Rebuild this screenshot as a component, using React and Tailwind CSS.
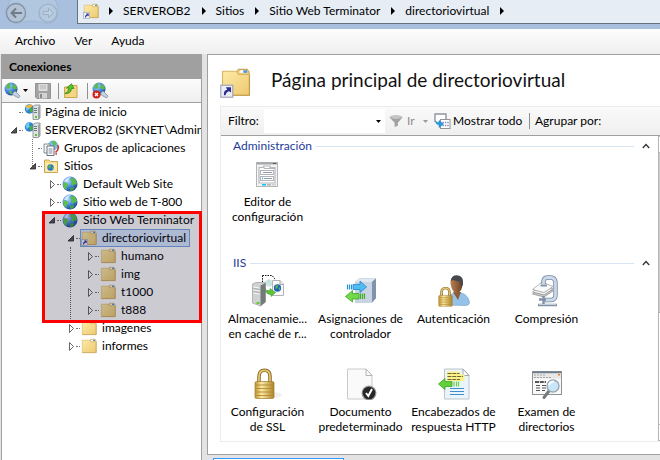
import React from "react";

function Globe({ size = 16 }) {
  return (
    <svg width={size} height={size} viewBox="0 0 16 16" className="shrink-0">
      <defs>
        <radialGradient id="globe" cx="0.35" cy="0.3" r="0.8">
          <stop offset="0" stopColor="#b4dcff" />
          <stop offset="0.5" stopColor="#4686e0" />
          <stop offset="1" stopColor="#17398f" />
        </radialGradient>
      </defs>
      <circle cx="8" cy="8" r="7.5" fill="url(#globe)" />
      <path d="M1 8 L3 6 L5.500 7.500 L6 9.500 L4.500 11 L4.800 14 L2 12 Z" fill="#5cc04a" />
      <path d="M8 4 L10 1.500 L13 3 L15 6.500 L14 9 L12 8 L11 10.500 L9 8 L10 6 Z" fill="#58bb4b" />
      <path d="M8 12 L11 11 L12.500 12.500 L10 15 L8 14.500 Z" fill="#3f9f44" />
      <path d="M2 6 Q4 0.800 9 1 Q5.500 3 5 6 Z" fill="#fff" opacity=".6" />
    </svg>
  );
}

function Folder({ shortcut = false, size = 16 }) {
  return (
    <svg width={size} height={size} viewBox="0 0 16 16" className="shrink-0">
      <defs>
        <linearGradient id="folder" x1="0" y1="0" x2="1" y2="1">
          <stop offset="0" stopColor="#fdeaa6" />
          <stop offset="1" stopColor="#edc970" />
        </linearGradient>
      </defs>
      <path d="M8 4 L9.500 1.200 H14 L15 2.500 V5 H8 Z" fill="#efd58d" stroke="#c8a65a" strokeWidth=".6" />
      <rect x="10.500" y="1.700" width="2.600" height="1.300" fill="#fff" />
      <rect x="12" y="1.700" width="2" height="1.300" fill="#4a94e2" />
      <path d="M1.300 2.200 H8.500 L9.500 3.800 H15.200 V14.600 H1.300 Z" fill="url(#folder)" stroke="#d9b565" strokeWidth=".6" />
      <path d="M15.200 4 V14.600 H1.300" fill="none" stroke="#bf9c50" strokeWidth=".6" />
      {shortcut && (
        <g>
          <rect x=".4" y="9.400" width="6.200" height="6.200" fill="#eceef6" stroke="#a0a3b4" strokeWidth=".6" />
          <path d="M2 14.600 Q1.800 11.900 3.700 11.700 L3.100 10.500 H5.700 V13.200 L4.700 12.500 Q3.100 12.900 2.900 14.600 Z" fill="#2c2f92" />
        </g>
      )}
    </svg>
  );
}

function Server({ home = false }) {
  return (
    <svg width="17" height="16" viewBox="0 0 17 16" className="shrink-0">
      <circle cx="5.500" cy="5" r="4.700" fill="#2f7fd0" />
      <path d="M1.500 3.500 Q3 .8 6 .6 L5 3 L6 5 L3.500 6 L3 8 Z" fill="#6fcdee" />
      <path d="M5.500 5 L8 3 L9 7 L6 9 Z" fill="#49ab43" />
      {home && <path d="M1 1 L4 2 L6 0 L9 2 L6 4 L3 4 Z" fill="#f2b53a" />}
      <path d="M9 2.500 L11 1 H16 V14 L14 15.500 H9 Z" fill="#dfe2e2" stroke="#7d8688" strokeWidth=".8" />
      <path d="M14 3 L16 1.500 V14 L14 15.500 Z" fill="#9aa2a4" />
      <path d="M10 4.500 H13 M10 6.500 H13 M10 8.500 H13" stroke="#69787b" />
      <rect x="11" y="12" width="2" height="2" fill="#57c930" />
    </svg>
  );
}

function AppPools() {
  return (
    <svg width="17" height="16" viewBox="0 0 17 16" className="shrink-0">
      <circle cx="10" cy="5.500" r="5" fill="#79c0ec" />
      <path d="M8 1.500 L12 1 L14 4 L11 6 Z" fill="#65bd58" />
      <path d="M14.500 5 Q17 9 12.500 12.500" fill="none" stroke="#c8362c" strokeWidth="1.600" />
      <path d="M1 4 H7 V13 H1 Z" fill="#f2f4f6" stroke="#6f7780" strokeWidth=".8" />
      <path d="M4 6 H11 V15.500 H4 Z" fill="#fff" stroke="#5b636c" strokeWidth=".9" />
      <path d="M5.500 9 H9.500 M5.500 11 H9.500 M5.500 13 H9.500" stroke="#7c8aa0" />
      <path d="M11 14 L14 13 V15 Z" fill="#d84a38" />
    </svg>
  );
}

function SitesFolder() {
  return (
    <svg width="16" height="16" viewBox="0 0 16 16" className="shrink-0">
      <path d="M1.500 2 H6 L7.500 3.500 H14.500 V14.500 H1.500 Z" fill="#f8dc8c" stroke="#c5a04a" strokeWidth=".9" />
      <rect x="2.500" y="5" width="11.500" height="9" fill="#fbe9ae" />
      <circle cx="7.500" cy="9.500" r="3.200" fill="#2f74cc" />
      <path d="M5 8 L8 6.500 L8 9 L6 11 Z M9 9 L11 9 L9 12 Z" fill="#54b845" />
    </svg>
  );
}

function ConnectIcon({ remove = false }) {
  return (
    <svg width="17" height="17" viewBox="0 0 17 17">
      <circle cx="7" cy="7" r="6.500" fill="url(#globe)" />
      <path d="M2 4 L4 1.500 L6.500 1 L6 4 L7 6 L3.500 7 Z M8 5 L10 2 L12.500 4 L13 7 L10 7.500 Z M5 9 L8 9 L8 12 L6 12 Z" fill="#59bc49" />
      <path d="M8 12 L11 9 L16 14 L14.500 16 L11 14 Z" fill="#c3d4de" stroke="#7c93a1" strokeWidth=".8" />
      {remove && (
        <g>
          <circle cx="4.500" cy="12.500" r="4" fill="#d0201c" />
          <path d="M3 11 L6 14 M6 11 L3 14" stroke="#fff" strokeWidth="1.300" />
        </g>
      )}
    </svg>
  );
}

function SaveIcon() {
  return (
    <svg width="16" height="16" viewBox="0 0 16 16">
      <path d="M.5 .5 H15.500 V15.500 H2 L.5 14 Z" fill="#a3a3a3" stroke="#949494" />
      <rect x="3.500" y="1" width="9" height="7" fill="#dcdcdc" />
      <path d="M5 3 H11 M5 5 H11" stroke="#b5b5b5" />
      <rect x="4" y="10" width="8" height="5.500" fill="#d2d2d2" />
      <rect x="5" y="11" width="2" height="4" fill="#8a8a8a" />
    </svg>
  );
}

function UpFolder() {
  return (
    <svg width="16" height="16" viewBox="0 0 16 16">
      <path d="M1.500 4 H8 L9 2.500 H14 V14.500 H1.500 Z" fill="#f6d682" stroke="#c39d44" strokeWidth=".9" />
      <path d="M2 10.500 Q5.500 9.500 6 5 H3.500 L8.500 .8 L11 5.500 H8.500 Q8 11 2 10.500 Z" fill="#54c32f" stroke="#2f8d17" strokeWidth=".8" />
    </svg>
  );
}

function NavArrows() {
  return (
    <svg width="60" height="26" viewBox="0 0 60 26" className="shrink-0">
      <path d="M10 -4 H46 Q58 0 56 14 Q53 25 43 23 Q30 19 17 23 Q5 24 3 12 Z" fill="#b1c7e0" stroke="#9ab3cf" strokeWidth=".8" />
      <circle cx="14" cy="13" r="9.500" fill="#b3c3d5" stroke="#8292a4" strokeWidth="1.300" />
      <path d="M20 13 H9.500 M14 8.500 L9.500 13 L14 17.500" fill="none" stroke="#6f7c8a" strokeWidth="2" />
      <circle cx="46" cy="13" r="9" fill="#b5c9df" stroke="#9aafc6" strokeWidth="1.200" />
      <path d="M41 11.500 H46.500 V8.500 L51.500 13 L46.500 17.500 V14.500 H41 Z" fill="#bed0e4" stroke="#9aaec5" />
    </svg>
  );
}

function Funnel() {
  return (
    <svg width="14" height="14" viewBox="0 0 15 14">
      <ellipse cx="7.500" cy="3" rx="7" ry="2.400" fill="#c4c4c4" />
      <path d="M.5 3 L6 9 V13.500 L9.500 12 V9 L14.500 3 Q7.500 6.500 .5 3 Z" fill="#a2a2a2" />
    </svg>
  );
}

function ShowAll() {
  return (
    <svg width="17" height="16" viewBox="0 0 17 16">
      <path d="M1 9 V1 H12 V6" fill="#fff" stroke="#8f959b" strokeWidth="1.400" />
      <rect x="6.500" y="6.500" width="9.500" height="9" fill="#fff" stroke="#8f959b" />
      <path d="M8.500 9.500 H15 M8.500 12.500 H15" stroke="#8086bb" strokeWidth="1.400" strokeDasharray="1.400 1" />
      <path d="M1.500 8 Q2 12 5 11.500 V14.500 L9.500 11 L5 7.500 V9.500 Q3 10 1.500 8 Z" fill="#27a0e2" stroke="#1572b5" strokeWidth=".5" />
    </svg>
  );
}

function EditorIcon() {
  return (
    <svg width="32" height="32" viewBox="0 0 32 32">
      <rect x="4.500" y="4.500" width="21" height="24" fill="#f4f4f4" stroke="#b4b4b4" />
      <path d="M5 5.500 H25" stroke="#a3a7ab" strokeWidth="2" />
      <path d="M21 5.500 H24" stroke="#5b6067" />
      <path d="M7 25 V9.500 H11 L12 8 H18 V9.500 H23 V25 Z" fill="#fff" stroke="#b4b7bb" strokeWidth="1.200" />
      <path d="M12 8.500 V10.500 H23" stroke="#b4b7bb" fill="none" />
      <rect x="8.500" y="12.500" width="13" height="4" fill="#fff" stroke="#b0b4b9" />
      <rect x="8.500" y="18.500" width="13" height="4" fill="#fff" stroke="#b0b4b9" />
      <path d="M11 14.500 H20 M12 20.500 H20" stroke="#8d98a8" />
      <path d="M10 20.500 H11" stroke="#1aa7e0" strokeWidth="1.500" />
      <path d="M10 26.800 H14" stroke="#12c5f5" strokeWidth="1.600" />
      <path d="M15 26.800 H19" stroke="#b6b6b6" strokeWidth="1.600" />
      <path d="M20 26.800 H24" stroke="#d2d2d2" strokeWidth="1.600" />
    </svg>
  );
}

function CacheIcon() {
  return (
    <svg width="32" height="32" viewBox="0 0 32 32">
      <path d="M10.500 .5 H20 L23 4 V16 H10.500 Z" fill="#fff" stroke="#111" strokeDasharray="1.500 1" />
      <circle cx="17" cy="8" r="3.800" fill="#cfe5f3" />
      <path d="M15 6 L18 5 L17 9 Z M18 8 L20 8 L18.500 11 Z" fill="#bde3b4" />
      <path d="M.5 9 L4 7.500 H13.500 V27 L8.500 31 L.5 28 Z" fill="#cfd1d2" stroke="#999d9f" strokeWidth=".7" />
      <path d="M8.500 10.500 L13.500 8 V27 L8.500 31 Z" fill="#75797b" />
      <path d="M1.500 12 L7.500 13 M1.500 15 L7.500 16 M1.500 18 L7.500 19" stroke="#f2f4f4" strokeWidth="1.200" />
      <path d="M1.500 13.500 L7.500 14.500 M1.500 16.500 L7.500 17.500" stroke="#8d9193" strokeWidth=".6" />
      <rect x="4.500" y="27" width="3" height="2" fill="#5fd02f" />
      <path d="M20.500 5.500 H28 L31.500 9 V20.500 H20.500 Z" fill="#fbfbfb" stroke="#b4b4b4" />
      <path d="M28 5.500 V9.500 H32" fill="#e9e9e9" stroke="#a9a9a9" />
      <circle cx="25.500" cy="13" r="3.700" fill="#235fbd" />
      <path d="M23.500 10.500 L26.500 10 L25.500 13 L23.500 14 Z M26.500 13 L28.500 12 L27.500 16 Z" fill="#54bd4b" />
      <path d="M13 14 Q15 17 18 16 V13.500 L23.500 17.500 L19 21.500 V19.500 Q14 19.500 13 14 Z" fill="#5cc435" stroke="#3c9d29" strokeWidth=".6" />
    </svg>
  );
}

function HandlerIcon() {
  return (
    <svg width="32" height="32" viewBox="0 0 32 32">
      <path d="M10 7 L14 3.500 H31 V23 L27 27.500 H10 Z" fill="#8d9fb5" />
      <path d="M10 7 L14 3.500 H31 L27 7 Z" fill="#dfe7f1" />
      <rect x="10" y="7" width="17" height="20.500" fill="#c8d4e3" />
      <path d="M27 7 L31 3.500 V23 L27 27.500 Z" fill="#8093ae" />
      <path d="M8 9.500 H15 V6 L21.500 12 L15 17.500 V14.500 H8 Z" fill="#4fbdf2" stroke="#2384c8" strokeWidth=".8" />
      <path d="M2.500 9.500 V14.500 M4.500 9.500 V14.500 M6.500 9.500 V14.500" stroke="#2291d4" strokeWidth="1.200" />
      <path d="M14 18.500 H7.500 V15.500 L.5 21.500 L7.500 27 V24 H14 Z" fill="#72da48" stroke="#3aa524" strokeWidth=".8" />
      <path d="M15.500 18.500 V24 M17.500 18.500 V24 M19.500 18.500 V24" stroke="#43ad25" strokeWidth="1.200" />
    </svg>
  );
}

function LockShape() {
  return (
    <g>
      <path d="M5 14 V8 Q5 1.800 10.500 1.800 Q16 1.800 16 8 V14" fill="none" stroke="#8d6d28" strokeWidth="3.600" />
      <path d="M5 14 V8 Q5 1.800 10.500 1.800 Q16 1.800 16 8 V14" fill="none" stroke="#e6c976" strokeWidth="1.700" />
      <rect x="1" y="13" width="19" height="17" rx="1.500" fill="url(#brass)" stroke="#a07c2c" strokeWidth=".7" />
      <path d="M2 16.500 H19 M2 20 H19 M2 23.500 H19 M2 27 H19" stroke="#b48a2b" strokeWidth=".9" />
    </g>
  );
}

function AuthIcon() {
  return (
    <svg width="32" height="32" viewBox="0 0 32 32">
      <defs>
        <linearGradient id="skin"><stop stopColor="#b98257" /><stop offset="1" stopColor="#6b4022" /></linearGradient>
        <linearGradient id="brass"><stop stopColor="#c0932c" /><stop offset=".35" stopColor="#fbe9a8" /><stop offset="1" stopColor="#ad8224" /></linearGradient>
      </defs>
      <path d="M9 30 Q9 20 16 18 H24 Q31 21 31.500 28 Q31 30.500 27 30.500 Z" fill="#94c2e8" stroke="#6f9cc5" strokeWidth=".6" />
      <path d="M15 17 L20 25 L23 17 Z" fill="#8f5b36" />
      <path d="M12.500 9 Q12 1 18.500 1 Q25 1.500 24.500 9 Q24 17 19 18.500 Q14 17.500 12.500 9 Z" fill="url(#skin)" />
      <path d="M13 6 Q13 .3 19 .3 Q26 1 25 9 Q24.500 12 23.500 12 L22 7 L15 5 Z" fill="#45484d" />
      <svg x="0" y="12" width="15" height="20" viewBox="0 0 21 31" preserveAspectRatio="none"><LockShape /></svg>
    </svg>
  );
}

function CompressIcon() {
  return (
    <svg width="32" height="32" viewBox="0 0 32 32">
      <path d="M1.500 19 L11 12 L22 16 L13 22 Z" fill="#ccc" stroke="#777" strokeWidth=".6" />
      <path d="M1.500 17 L11 9.500 L22 14 L13 20 Z" fill="#eee" stroke="#777" strokeWidth=".6" />
      <path d="M1.500 14.500 L11 7 L22 11.500 L13 17.500 Z" fill="#fafafa" stroke="#888" strokeWidth=".6" />
      <path d="M12.500 9 V6 Q13 2.500 17 2.500 H20 Q24.500 3 24.500 8 V20 Q24.500 25 20 25 H13" fill="none" stroke="#7486a0" strokeWidth="4.400" />
      <path d="M12.500 9 V6 Q13 2.500 17 2.500 H20 Q24.500 3 24.500 8 V20 Q24.500 25 20 25 H13" fill="none" stroke="#cbd9e8" strokeWidth="2.800" />
      <path d="M9.500 10.500 H16" stroke="#8293aa" strokeWidth="2" />
      <path d="M8 24.500 H15 M12.500 21 V30 M7 30 H26" stroke="#8292a6" strokeWidth="2.400" />
      <path d="M8 29.500 H25" stroke="#d3dce5" strokeWidth=".8" />
    </svg>
  );
}

function SslIcon() {
  return (
    <svg width="32" height="32" viewBox="0 0 32 32">
      <ellipse cx="22" cy="27" rx="8" ry="3" fill="#f0f0f0" />
      <svg x="2" y="0" width="21" height="32" viewBox="0 0 21 31"><LockShape /></svg>
    </svg>
  );
}

function DocIcon() {
  return (
    <svg width="32" height="32" viewBox="0 0 32 32">
      <path d="M2.500 1 H21 L27 7 V31 H2.500 Z" fill="#fafafa" stroke="#cacaca" />
      <path d="M21 1 V7.500 H27 Z" fill="#fff" stroke="#b4b4b4" />
      <circle cx="24" cy="25" r="7.500" fill="#9b9b9b" />
      <circle cx="24" cy="25" r="6.300" fill="#262626" />
      <path d="M21 25 L23.300 28 L27 21" fill="none" stroke="#fff" strokeWidth="2" />
    </svg>
  );
}

function HeadersIcon() {
  return (
    <svg width="32" height="32" viewBox="0 0 32 32">
      <path d="M6.500 1 H25 L31 7 V31 H6.500 Z" fill="#eaf5fb" stroke="#bcc4c8" />
      <path d="M25 1 V7.500 H31 Z" fill="#fff" stroke="#a2aaae" />
      <path d="M9 3.500 H22 V6.500 H26.500 V13 H9 Z" fill="#fbf28a" />
      <path d="M9.500 5.500 H21.500 M9.500 8.500 H25 M9.500 11.500 H22" stroke="#6b6530" strokeDasharray="4 .8" />
      <path d="M12 20.500 H26 M12 23.500 H26 M12 26.500 H26" stroke="#3f8fd0" />
      <path d="M14 13.500 H7 V10.500 L.5 16 L7 21.500 V18.500 H14 Z" fill="#62d038" stroke="#3aa524" strokeWidth=".8" />
      <path d="M16 13.500 V18.500 M18.500 13.500 V18.500 M20.500 13.500 V18.500" stroke="#6ed04c" strokeWidth="1.200" />
    </svg>
  );
}

function BrowseIcon() {
  return (
    <svg width="32" height="32" viewBox="0 0 32 32">
      <rect x="1.500" y="3.500" width="29" height="23" fill="#f9f9f9" stroke="#8c9196" />
      <path d="M2 4.500 H30" stroke="#6f7c8c" strokeWidth="2" />
      <rect x="2" y="5.500" width="28" height="5" fill="#e8e8e8" />
      <path d="M3 7 H15 M3 9.500 H20" stroke="#a5a5a5" strokeDasharray="2 1" />
      <path d="M27 6.800 H29" stroke="#e0812a" strokeWidth="1.500" />
      <path d="M4 14 H15" stroke="#222" strokeWidth="1.400" strokeDasharray="4 .8" />
      <path d="M5 17.500 H9 M5 20 H9 M5 22.500 H9 M11 17.500 H15 M11 20 H15 M11 22.500 H14" stroke="#555" />
      <path d="M18 23 L13 29.500" stroke="#7a7a7a" strokeWidth="3" strokeLinecap="round" />
      <circle cx="22" cy="18" r="6" fill="#c9e5f9" stroke="#97a6b2" strokeWidth="1.300" />
      <path d="M18 17 Q19 13.500 23 13.500" fill="none" stroke="#fff" strokeWidth="1.800" />
    </svg>
  );
}

function Caret({ muted = false }) {
  return (
    <svg width="5" height="3" viewBox="0 0 5 3" className="shrink-0">
      <path d="M0 0 H5 L2.500 3 Z" fill={muted ? "#999" : "#000"} />
    </svg>
  );
}

function Separator() {
  return <span className="h-4 w-px shrink-0 bg-[#8f8f8f]" />;
}

function Expander({ state }) {
  if (!state) return null;
  return (
    <button type="button" aria-label={state === "open" ? "Contraer" : "Expandir"} className="block">
      <svg width="8" height="10" viewBox="0 0 8 10">
        {state === "open" ? (
          <path d="M6.500 2.500 V8 H1 Z" fill="#555" stroke="#262626" strokeWidth=".8" />
        ) : (
          <path d="M2.500 1.500 L6.500 5.500 L2.500 9.500 Z" fill="#fff" stroke="#666" strokeWidth="1" />
        )}
      </svg>
    </button>
  );
}

const tree = [
  { label: "Página de inicio", icon: <Server home />, indent: "pl-1" },
  { label: "SERVEROB2 (SKYNET\\Adminis", icon: <Server />, indent: "pl-1", state: "open" },
  { label: "Grupos de aplicaciones", icon: <AppPools />, indent: "pl-[23px]" },
  { label: "Sitios", icon: <SitesFolder />, indent: "pl-[23px]", state: "open" },
  { label: "Default Web Site", icon: <Globe />, indent: "pl-[42px]", state: "closed" },
  { label: "Sitio web de T-800", icon: <Globe />, indent: "pl-[42px]", state: "closed" },
  { label: "Sitio Web Terminator", icon: <Globe />, indent: "pl-[42px]", state: "open" },
  { label: "directoriovirtual", icon: <Folder shortcut />, indent: "pl-[61px]", state: "open", selected: true },
  { label: "humano", icon: <Folder />, indent: "pl-20", state: "closed" },
  { label: "img", icon: <Folder />, indent: "pl-20", state: "closed" },
  { label: "t1000", icon: <Folder />, indent: "pl-20", state: "closed" },
  { label: "t888", icon: <Folder />, indent: "pl-20", state: "closed" },
  { label: "imagenes", icon: <Folder />, indent: "pl-[61px]", state: "closed" },
  { label: "informes", icon: <Folder />, indent: "pl-[61px]", state: "closed" },
];

function TreeRow({ item }) {
  return (
    <li className={"flex h-[18px] items-center " + item.indent}>
      <span className="flex w-3 shrink-0 justify-end">
        <Expander state={item.state} />
      </span>
      <span className="ml-px w-1 shrink-0 border-t border-dotted border-[#777]" />
      <span
        className={
          "flex h-[18px] items-center gap-1 whitespace-nowrap pr-1 " +
          (item.selected ? "bg-[#d9e9ff] outline outline-1 -outline-offset-1 outline-[#7aa7e0]" : "")
        }
      >
        <span className="flex w-[18px] shrink-0 justify-center">{item.icon}</span>
        {item.label}
      </span>
    </li>
  );
}

function Connections() {
  return (
    <aside className="ml-px flex w-[201px] shrink-0 flex-col border-x border-t border-[#a0a0a0] bg-white">
      <h2 className="flex h-6 shrink-0 items-center bg-[#a0a0a0] pl-[7px] font-bold">Conexiones</h2>
      <div className="flex h-6 shrink-0 items-center border-b border-[#a0a0a0] bg-linear-to-b from-[#fcfcfc] to-[#efefef] pl-0.5">
        <button type="button" aria-label="Conectar" className="flex items-center gap-0.5">
          <ConnectIcon />
          <Caret />
        </button>
        <button type="button" aria-label="Guardar" className="mx-[7px]"><SaveIcon /></button>
        <Separator />
        <button type="button" aria-label="Subir" className="ml-1 mr-2"><UpFolder /></button>
        <Separator />
        <button type="button" aria-label="Desconectar" className="ml-1"><ConnectIcon remove /></button>
      </div>
      <div className="relative flex-1">
        <ul className="overflow-hidden">
          {tree.map((item) => (
            <TreeRow key={item.label} item={item} />
          ))}
        </ul>
        <div className="pointer-events-none absolute -right-px left-10 top-[108px] h-28 border-[3px] border-[#fe0000] bg-[#191432]/22" />
        <div className="pointer-events-none absolute left-[30px] top-9 h-[27px] border-l border-dotted border-[#777]" />
        <div className="pointer-events-none absolute left-[68px] top-36 h-[72px] border-l border-dotted border-[#555]" />
      </div>
    </aside>
  );
}

function GroupHeader({ title }) {
  return (
    <div className="flex h-5 items-center gap-1 pl-3 pr-2">
      <h3 className="text-[#1c3a9c]">{title}</h3>
      <span className="h-px flex-1 bg-[#d8e6f4]" />
      <button type="button" aria-label={"Contraer " + title} className="ml-1">
        <svg width="8" height="6" viewBox="0 0 8 6">
          <path d="M.8 5 L4 1.500 L7.200 5" fill="none" stroke="#333" strokeWidth="1.300" />
        </svg>
      </button>
    </div>
  );
}

function Feature({ icon, lines }) {
  return (
    <button type="button" className="flex w-[93px] flex-col items-center gap-1 text-center leading-[15px]">
      {icon}
      <span>
        {lines.map((line) => (
          <span key={line} className="block whitespace-nowrap">{line}</span>
        ))}
      </span>
    </button>
  );
}

function Workspace() {
  return (
    <main className="flex min-w-0 flex-1 flex-col">
      <section className="flex flex-1 flex-col border-y border-l border-[#a0a0a0] bg-white pb-3 pl-3">
        <div className="flex h-[51px] shrink-0 items-center gap-5 pt-1">
          <Folder shortcut size={31} />
          <h1 className="pb-1.5 text-[19px] text-[#111]">Página principal de directoriovirtual</h1>
        </div>
        <div className="flex flex-1 flex-col border-b border-l border-t border-[#ececec]">
          <div className="flex h-[29px] shrink-0 items-center border-b border-[#a0a0a0] bg-linear-to-b from-[#fafafa] to-[#efefef] pl-[7px]">
            <label htmlFor="filter" className="w-8">Filtro:</label>
            <div className="ml-1 flex h-6 w-[121px] items-center bg-white pr-1">
              <input id="filter" type="text" className="min-w-0 flex-1 outline-none" />
              <button type="button" aria-label="Filtros recientes"><Caret /></button>
            </div>
            <button type="button" className="ml-1 flex items-center gap-1 text-[#8d8d8d]">
              <Funnel />
              <span className="w-3 text-left">Ir</span>
              <Caret muted />
            </button>
            <button type="button" className="ml-1.5 flex items-center gap-0.5 whitespace-nowrap">
              <ShowAll />
              <span className="w-[76px] text-left">Mostrar todo</span>
            </button>
            <Separator />
            <span className="ml-[5px] whitespace-nowrap">Agrupar por:</span>
          </div>
          <div className="flex flex-1">
            <div className="min-w-0 flex-1">
              <GroupHeader title="Administración" />
              <div className="flex h-[97px] pt-0.5">
                <Feature icon={<EditorIcon />} lines={["Editor de", "configuración"]} />
              </div>
              <GroupHeader title="IIS" />
              <div className="flex h-[93px] pt-0.5">
                <Feature icon={<CacheIcon />} lines={["Almacenamie...", "en caché de r..."]} />
                <Feature icon={<HandlerIcon />} lines={["Asignaciones de", "controlador"]} />
                <Feature icon={<AuthIcon />} lines={["Autenticación"]} />
                <Feature icon={<CompressIcon />} lines={["Compresión"]} />
              </div>
              <div className="flex pt-0.5">
                <Feature icon={<SslIcon />} lines={["Configuración", "de SSL"]} />
                <Feature icon={<DocIcon />} lines={["Documento", "predeterminado"]} />
                <Feature icon={<HeadersIcon />} lines={["Encabezados de", "respuesta HTTP"]} />
                <Feature icon={<BrowseIcon />} lines={["Examen de", "directorios"]} />
              </div>
            </div>
            <div className="flex w-0.5 flex-col border-y border-l border-[#b4b4b4]">
              <div className="h-4 border-b border-[#b4b4b4]" />
              <div className="h-40 border-b border-[#a0a0a0] bg-[#cdcdcd]" />
              <div className="flex-1" />
              <div className="h-4 border-t border-[#b4b4b4]" />
            </div>
          </div>
        </div>
      </section>
      <div className="flex h-[5px] items-end pl-1.5">
        <div className="h-0.5 w-[131px] border-x border-t border-[#3399ff] bg-white" />
      </div>
    </main>
  );
}

function Breadcrumb() {
  const parts = ["SERVEROB2", "Sitios", "Sitio Web Terminator", "directoriovirtual"];
  const arrow = (
    <svg width="4" height="8" viewBox="0 0 4 8" className="shrink-0">
      <path d="M0 0 L4 4 L0 8 Z" fill="#000" />
    </svg>
  );
  return (
    <nav className="flex h-6 flex-1 items-center gap-2.5 border-b border-l border-[#66717f] bg-[#e6edf5] pb-px pl-[5px]">
      <Folder shortcut />
      {parts.map((part) => (
        <React.Fragment key={part}>
          {arrow}
          <a href="#" className="whitespace-nowrap pr-px">{part}</a>
        </React.Fragment>
      ))}
      {arrow}
    </nav>
  );
}

export default function App() {
  return (
    <div className="flex min-h-screen flex-col overflow-hidden bg-[#e3e3e3] font-[Lato,'Open_Sans',sans-serif] text-[12px] leading-4 text-black">
      <header className="flex h-[29px] shrink-0 items-start bg-[#a8c0dd]">
        <div className="w-[77px] shrink-0 pl-0.5"><NavArrows /></div>
        <Breadcrumb />
      </header>
      <div className="flex h-[25px] shrink-0 items-center gap-[19px] bg-linear-to-b from-[#fdfdfd] to-[#efefef] pb-px pl-[15px]">
        <button type="button">Archivo</button>
        <button type="button">Ver</button>
        <button type="button">Ayuda</button>
      </div>
      <div className="flex flex-1 gap-[5px]">
        <Connections />
        <Workspace />
      </div>
    </div>
  );
}
